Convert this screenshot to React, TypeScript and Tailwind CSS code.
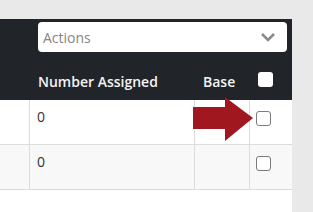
const rows = [
  { id: 1, assigned: "0", base: "", bg: "bg-white" },
  { id: 2, assigned: "0", base: "", bg: "bg-[#f8f8f8]" },
];

function Checkbox({ dark }: { dark?: boolean }) {
  return (
    <span
      className={`block w-[15px] h-[15px] rounded-[3px] ${
        dark ? "bg-white" : "border border-[#7a7a7a] bg-white"
      }`}
    />
  );
}

export default function App() {
  return (
    <main
      className="w-[313px] h-[212px] bg-[#e9e9e9] pt-[19px] overflow-hidden"
      style={{ fontFamily: "'Open Sans', Lato, sans-serif" }}
    >
      <div className="w-[292px] h-[193px] bg-white">
        <div className="bg-[#212529] h-[81px] pt-[3px]">
          <div className="ml-[38px] w-[249px] h-[30px] rounded-[4px] bg-white flex items-center justify-between pl-[5px] pr-[11px]">
            <span className="text-[14px] text-[#858585]">Actions</span>
            <svg width="16" height="10" viewBox="0 0 16 10" fill="none">
              <path d="M2 2 L8 8 L14 2" stroke="#8a8a8a" strokeWidth="2.6" />
            </svg>
          </div>
          <div className="grid grid-cols-[30px_165px_55px_42px] mt-[20px] text-[14px] leading-[18px] text-[#f4f4f4] items-end">
            <div />
            <div className="pl-[8px] font-semibold">Number Assigned</div>
            <div className="pl-[8px] font-semibold">Base</div>
            <div className="pl-[8px] pb-[4px]">
              <Checkbox dark />
            </div>
          </div>
        </div>
        {rows.map((r) => (
          <div
            key={r.id}
            className={`grid grid-cols-[30px_165px_55px_42px] h-[45px] border-b border-[#dcdcdc] ${r.bg}`}
          >
            <div className="border-r border-[#dcdcdc]" />
            <div className="border-r border-[#dcdcdc] pl-[7px] pt-[9px] text-[14px] text-[#333] leading-[16px]">
              {r.assigned}
            </div>
            <div className="border-r border-[#dcdcdc]">{r.base}</div>
            <div className="pl-[6px] pt-[11px] relative">
              <Checkbox />
              {r.id === 1 && (
                <svg
                  className="absolute left-[-57px] top-[-3px]"
                  width="60"
                  height="44"
                  viewBox="0 0 60 44"
                >
                  <path d="M0 10 H32 V0 L60 21 L32 44 V32 H0 Z" fill="#a0171f" />
                </svg>
              )}
            </div>
          </div>
        ))}
      </div>
    </main>
  );
}
